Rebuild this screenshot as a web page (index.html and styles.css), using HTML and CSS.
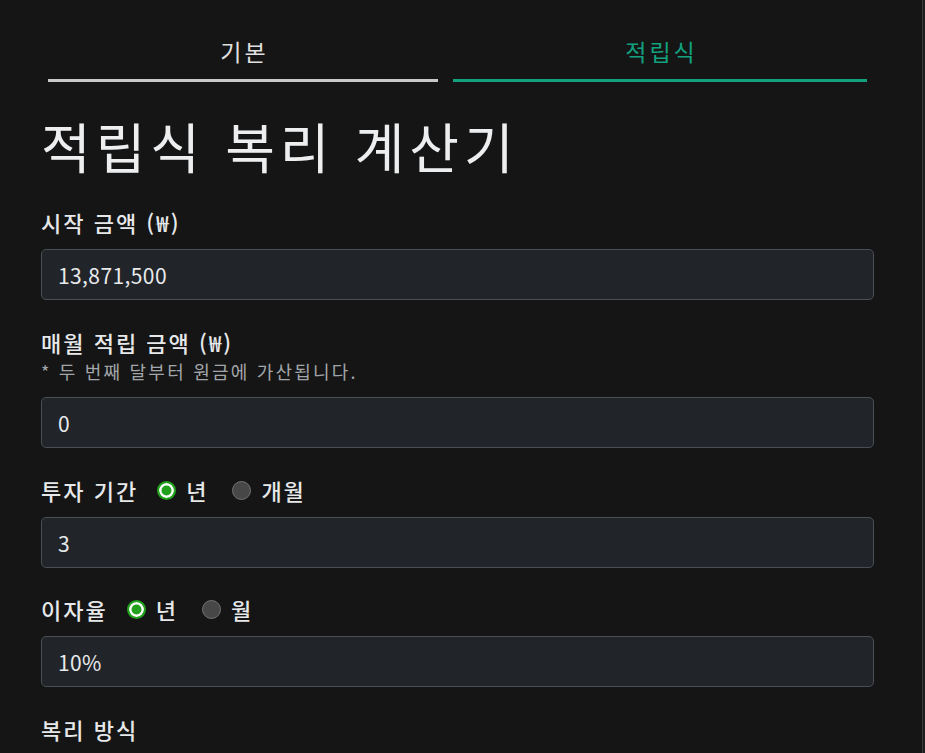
FILE: index.html
```html
<!DOCTYPE html>
<html lang="ko">
<head>
<meta charset="utf-8">
<title>적립식 복리 계산기</title>
<link rel="stylesheet" href="styles.css">
</head>
<body>
<div class="page">
  <main class="content">
    <nav class="tabs">
      <div class="tab tab-basic">기본</div>
      <div class="tab tab-active">적립식</div>
    </nav>
    <h1 class="title">적립식 복리 계산기</h1>

    <section class="field">
      <label class="label">시작 금액 (₩)</label>
      <div class="input">13,871,500</div>
    </section>

    <section class="field">
      <label class="label">매월 적립 금액 (₩)</label>
      <div class="hint">* 두 번째 달부터 원금에 가산됩니다.</div>
      <div class="input">0</div>
    </section>

    <section class="field field-tight">
      <div class="label label-row">
        <span>투자 기간</span>
        <span class="radio checked"></span><span>년</span>
        <span class="radio second"></span><span>개월</span>
      </div>
      <div class="input">3</div>
    </section>

    <section class="field">
      <div class="label label-row">
        <span>이자율</span>
        <span class="radio checked"></span><span>년</span>
        <span class="radio second"></span><span>월</span>
      </div>
      <div class="input">10%</div>
    </section>

    <section class="field">
      <div class="label">복리 방식</div>
    </section>
  </main>
  <div class="edge"></div>
</div>
</body>
</html>
```

FILE: styles.css
```css
html, body {
  margin: 0;
  padding: 0;
  background: #151515;
  height: 100%;
  overflow: hidden;
}
body {
  font-family: "Noto Sans CJK KR", "Noto Sans", sans-serif;
  color: #e4e6e8;
}
.page {
  display: flex;
  height: 753px;
}
.content {
  flex: 1;
  padding: 0 48px 0 41px;
  border-right: 1px solid #3c3c3c;
}
.edge {
  width: 2px;
  background: #1d1d1d;
}
.tabs {
  display: grid;
  grid-template-columns: 390px 414px;
  column-gap: 15px;
  margin: 0 0 0 7px;
  padding-top: 36px;
}
.tab {
  text-align: center;
  font-size: 23px;
  line-height: 30px;
  letter-spacing: 3px;
  text-indent: 3px;
  padding-bottom: 13px;
  border-bottom: 3px solid #c8c8c8;
  color: #e0e0e0;
}
.tab-active {
  color: #13a07f;
  border-bottom-color: #13a07f;
}
.title {
  margin: 29px 0 26px 0;
  font-size: 54px;
  line-height: 70px;
  font-weight: 400;
  letter-spacing: 5px;
  color: #eceef0;
}
.field {
  display: flex;
  flex-direction: column;
  margin-bottom: 27px;
}
.field-tight {
  margin-bottom: 26px;
}
.label {
  font-size: 22px;
  line-height: 30px;
  font-weight: 500;
  letter-spacing: 2px;
  margin-bottom: 12px;
  color: #e6e8ea;
}
.label-row {
  display: flex;
  align-items: center;
  height: 30px;
  overflow: hidden;
}
.label-row .radio {
  margin-left: 19px;
  margin-right: 10px;
}
.label-row .second {
  margin-left: 24px;
}
.hint {
  font-size: 18px;
  line-height: 22px;
  letter-spacing: 2.2px;
  color: #a2a6aa;
  margin-top: -9px;
  margin-bottom: 15px;
}
.radio {
  display: inline-block;
  flex: none;
  width: 17px;
  height: 17px;
  border-radius: 50%;
  background: #474747;
  border: 1px solid #727272;
  box-sizing: content-box;
}
.radio.checked {
  background: #22a11c;
  border: 2px solid #22a11c;
  width: 15px;
  height: 15px;
  box-shadow: inset 0 0 0 2.5px #ffffff;
}
.input {
  box-sizing: border-box;
  height: 51px;
  background: #212529;
  border: 1px solid #4a4f55;
  border-radius: 5px;
  padding: 0 16px;
  display: flex;
  align-items: center;
  font-size: 21px;
  letter-spacing: 0.4px;
  color: #e8eaec;
}
```
